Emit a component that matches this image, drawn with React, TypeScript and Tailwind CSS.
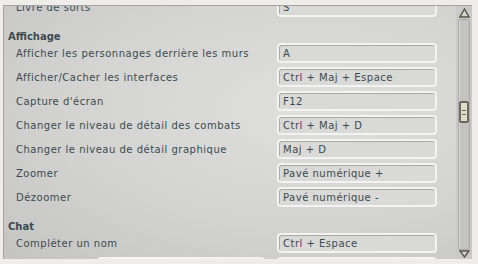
import React from "react"

const Key = ({ value, className = "" }: { value: string; className?: string }) => (
  <div
    className={`h-[20px] rounded-[4px] border-2 border-[#f3f3f1] bg-[#d9d9d7] shadow-[inset_1px_1px_0_#a9a9a6] flex items-center pl-[4px] text-[#3c4a50] ${className}`}
  >
    {value}
  </div>
)

const Row = ({ label, value }: { label: string; value: string }) => (
  <div className="h-[24px] flex items-center">
    <p className="w-[273px] pl-[12px] whitespace-nowrap overflow-hidden">{label}</p>
    <Key value={value} className="w-[160px]" />
  </div>
)

const Header = ({ title }: { title: string }) => (
  <div className="h-[22px] flex items-end pl-[4px]">
    <p className="font-bold leading-[8px] tracking-[0px]">{title}</p>
  </div>
)

export default function App() {
  return (
    <div className="w-[478px] h-[264px] bg-[#efede9] pt-[5px] pl-[3px] overflow-hidden">
      <div
        className="w-[469px] h-[254px] flex border-l border-t border-[#a3a3a1] overflow-hidden bg-[radial-gradient(ellipse_at_65%_40%,#dfdfdd_0%,#d3d3d1_55%,#c4c4c2_100%)]"
        style={{ fontFamily: '"DejaVu Sans", Verdana, sans-serif' }}
      >
        <div className="w-[453px] h-full overflow-hidden text-[10px] text-[#3c4a50] tracking-[0.5px]">
          <div className="mt-[-11px]">
            <Row label="Livre de sorts" value="S" />
            <Header title="Affichage" />
            <Row label="Afficher les personnages derrière les murs" value="A" />
            <Row label="Afficher/Cacher les interfaces" value="Ctrl + Maj + Espace" />
            <Row label="Capture d'écran" value="F12" />
            <Row label="Changer le niveau de détail des combats" value="Ctrl + Maj + D" />
            <Row label="Changer le niveau de détail graphique" value="Maj + D" />
            <Row label="Zoomer" value="Pavé numérique +" />
            <Row label="Dézoomer" value="Pavé numérique -" />
            <Header title="Chat" />
            <Row label="Compléter un nom" value="Ctrl + Espace" />
            <div className="h-[24px] flex items-center">
              <div className="w-[273px] pl-[93px]">
                <Key value="" className="w-[168px]" />
              </div>
              <Key value="" className="w-[160px]" />
            </div>
          </div>
        </div>
        <div className="w-[16px] h-full flex flex-col items-center pt-[2px] pb-[1px] bg-[#c9c9c7]">
          <svg width="11" height="10" viewBox="0 0 11 10" className="shrink-0">
            <polygon points="5.5,1 10,9 1,9" fill="#d6d6cc" stroke="#55554c" strokeWidth="1.4" />
          </svg>
          <div className="mt-[1px] w-[12px] flex-1 rounded-[3px] border border-[#a8a8a4] bg-[#c2c2c0] shadow-[inset_1px_0_0_#d8d8d6] flex flex-col items-center pt-[81px]">
            <div className="w-[10px] h-[22px] rounded-[2px] border-2 border-[#6c6a60] bg-[#dcdcce] flex flex-col items-center justify-center gap-[3px]">
              <div className="w-[4px] h-[1px] bg-[#6c6a60]" />
              <div className="w-[4px] h-[1px] bg-[#6c6a60]" />
            </div>
          </div>
          <svg width="11" height="8" viewBox="0 0 11 8" className="shrink-0">
            <polygon points="1,1 10,1 5.5,7" fill="#d6d6cc" stroke="#55554c" strokeWidth="1.4" />
          </svg>
        </div>
      </div>
    </div>
  )
}
